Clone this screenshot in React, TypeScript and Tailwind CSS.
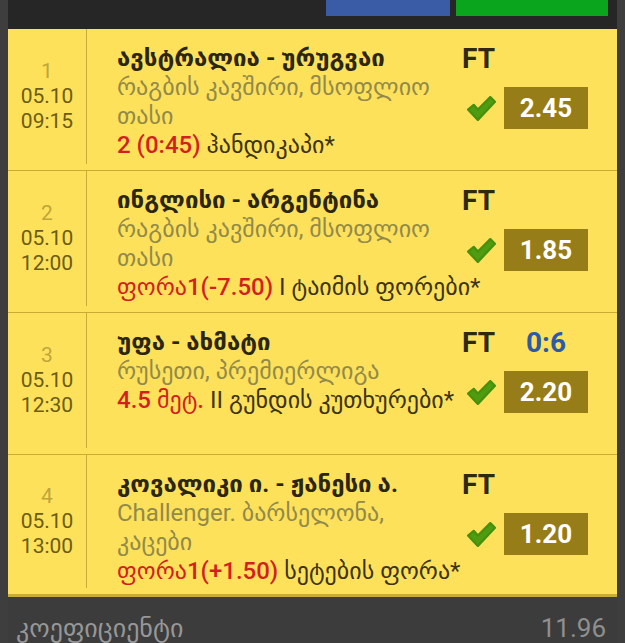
import React from 'react';

type Bet = {
  n: number;
  date: string;
  time: string;
  title: string;
  sub: string;
  red: string;
  rest: string;
  odds: string;
  score?: string;
};

const bets: Bet[] = [
  { n: 1, date: '05.10', time: '09:15', title: 'ავსტრალია - ურუგვაი', sub: 'რაგბის კავშირი, მსოფლიო თასი', red: '2 (0:45)', rest: 'ჰანდიკაპი*', odds: '2.45' },
  { n: 2, date: '05.10', time: '12:00', title: 'ინგლისი - არგენტინა', sub: 'რაგბის კავშირი, მსოფლიო თასი', red: 'ფორა1(-7.50)', rest: 'I ტაიმის ფორები*', odds: '1.85' },
  { n: 3, date: '05.10', time: '12:30', title: 'უფა - ახმატი', sub: 'რუსეთი, პრემიერლიგა', red: '4.5 მეტ.', rest: 'II გუნდის კუთხურები*', odds: '2.20', score: '0:6' },
  { n: 4, date: '05.10', time: '13:00', title: 'კოვალიკი ი. - ჟანესი ა.', sub: 'Challenger. ბარსელონა, კაცები', red: 'ფორა1(+1.50)', rest: 'სეტების ფორა*', odds: '1.20' },
];

const Check = () => (
  <svg width="29" height="25" viewBox="0 0 28 24">
    <path
      d="M1 13 L6.5 8.5 L10.5 13 L22.5 1 L27 5.5 L10.5 23 Z"
      fill="#4f9c10"
      stroke="#46900d"
      strokeWidth="2.2"
      strokeLinejoin="round"
    />
  </svg>
);

const BetRow = ({ bet, last }: { bet: Bet; last: boolean }) => (
  <div
    className={`h-[142px] flex bg-[#fee15b] border-[#c9ac33] ${
      last ? 'border-b-[3px]' : 'border-b'
    }`}
  >
    <div className="w-[79px] shrink-0 mb-[6px] border-r border-[#c9ac33] flex flex-col items-center justify-center text-[21px] leading-[25px]">
      <span className="text-[#bea63a]">{bet.n}</span>
      <span className="text-[#6b5c14]">{bet.date}</span>
      <span className="text-[#6b5c14]">{bet.time}</span>
    </div>

    <div className="flex-1 pl-[30px] pr-[29px] pt-[15px]">
      <div className="float-right w-[126px] grid grid-cols-[42px_84px]">
        <span className="text-[28px] leading-[29px] font-bold text-[#2f2a0d]">FT</span>
        <span className="text-[28px] leading-[29px] font-bold text-[#2d5aa7] text-center">
          {bet.score}
        </span>
        <div className="mt-[14px] flex items-center justify-center pr-[4px]">
          <Check />
        </div>
        <div className="mt-[14px] h-[42px] bg-[#977d17] flex items-center justify-center text-white text-[26px] font-bold">
          {bet.odds}
        </div>
      </div>

      <div className="text-[24px] leading-[29px] font-bold text-[#2b2610]">{bet.title}</div>
      <div className="text-[24px] leading-[29px] text-[#928a4a]">{bet.sub}</div>
      <div className="text-[24px] leading-[29px] text-[#3b3414] whitespace-nowrap">
        <span className="text-[#d31f1f] font-medium">{bet.red}</span> {bet.rest}
      </div>
    </div>
  </div>
);

export default function App() {
  return (
    <div className="h-[643px] overflow-hidden bg-[#3e3e3e] px-2 font-[family-name:Roboto,'DejaVu_Sans',sans-serif]">
      <div className="h-[29px] bg-[#262626] flex justify-end gap-[6px] pr-[9px]">
        <div className="w-[124px] h-[16px] bg-[#3a5ba6]" />
        <div className="w-[152px] h-[16px] bg-[#0aa51c]" />
      </div>

      {bets.map((b, i) => (
        <BetRow key={b.n} bet={b} last={i === bets.length - 1} />
      ))}

      <div className="bg-[#3c3c3c] flex justify-between pl-[8px] pr-[11px] pt-[16px] text-[26px] leading-[30px]">
        <span className="text-[#979797]">კოეფიციენტი</span>
        <span className="text-[#8f8f8f]">11.96</span>
      </div>
    </div>
  );
}
